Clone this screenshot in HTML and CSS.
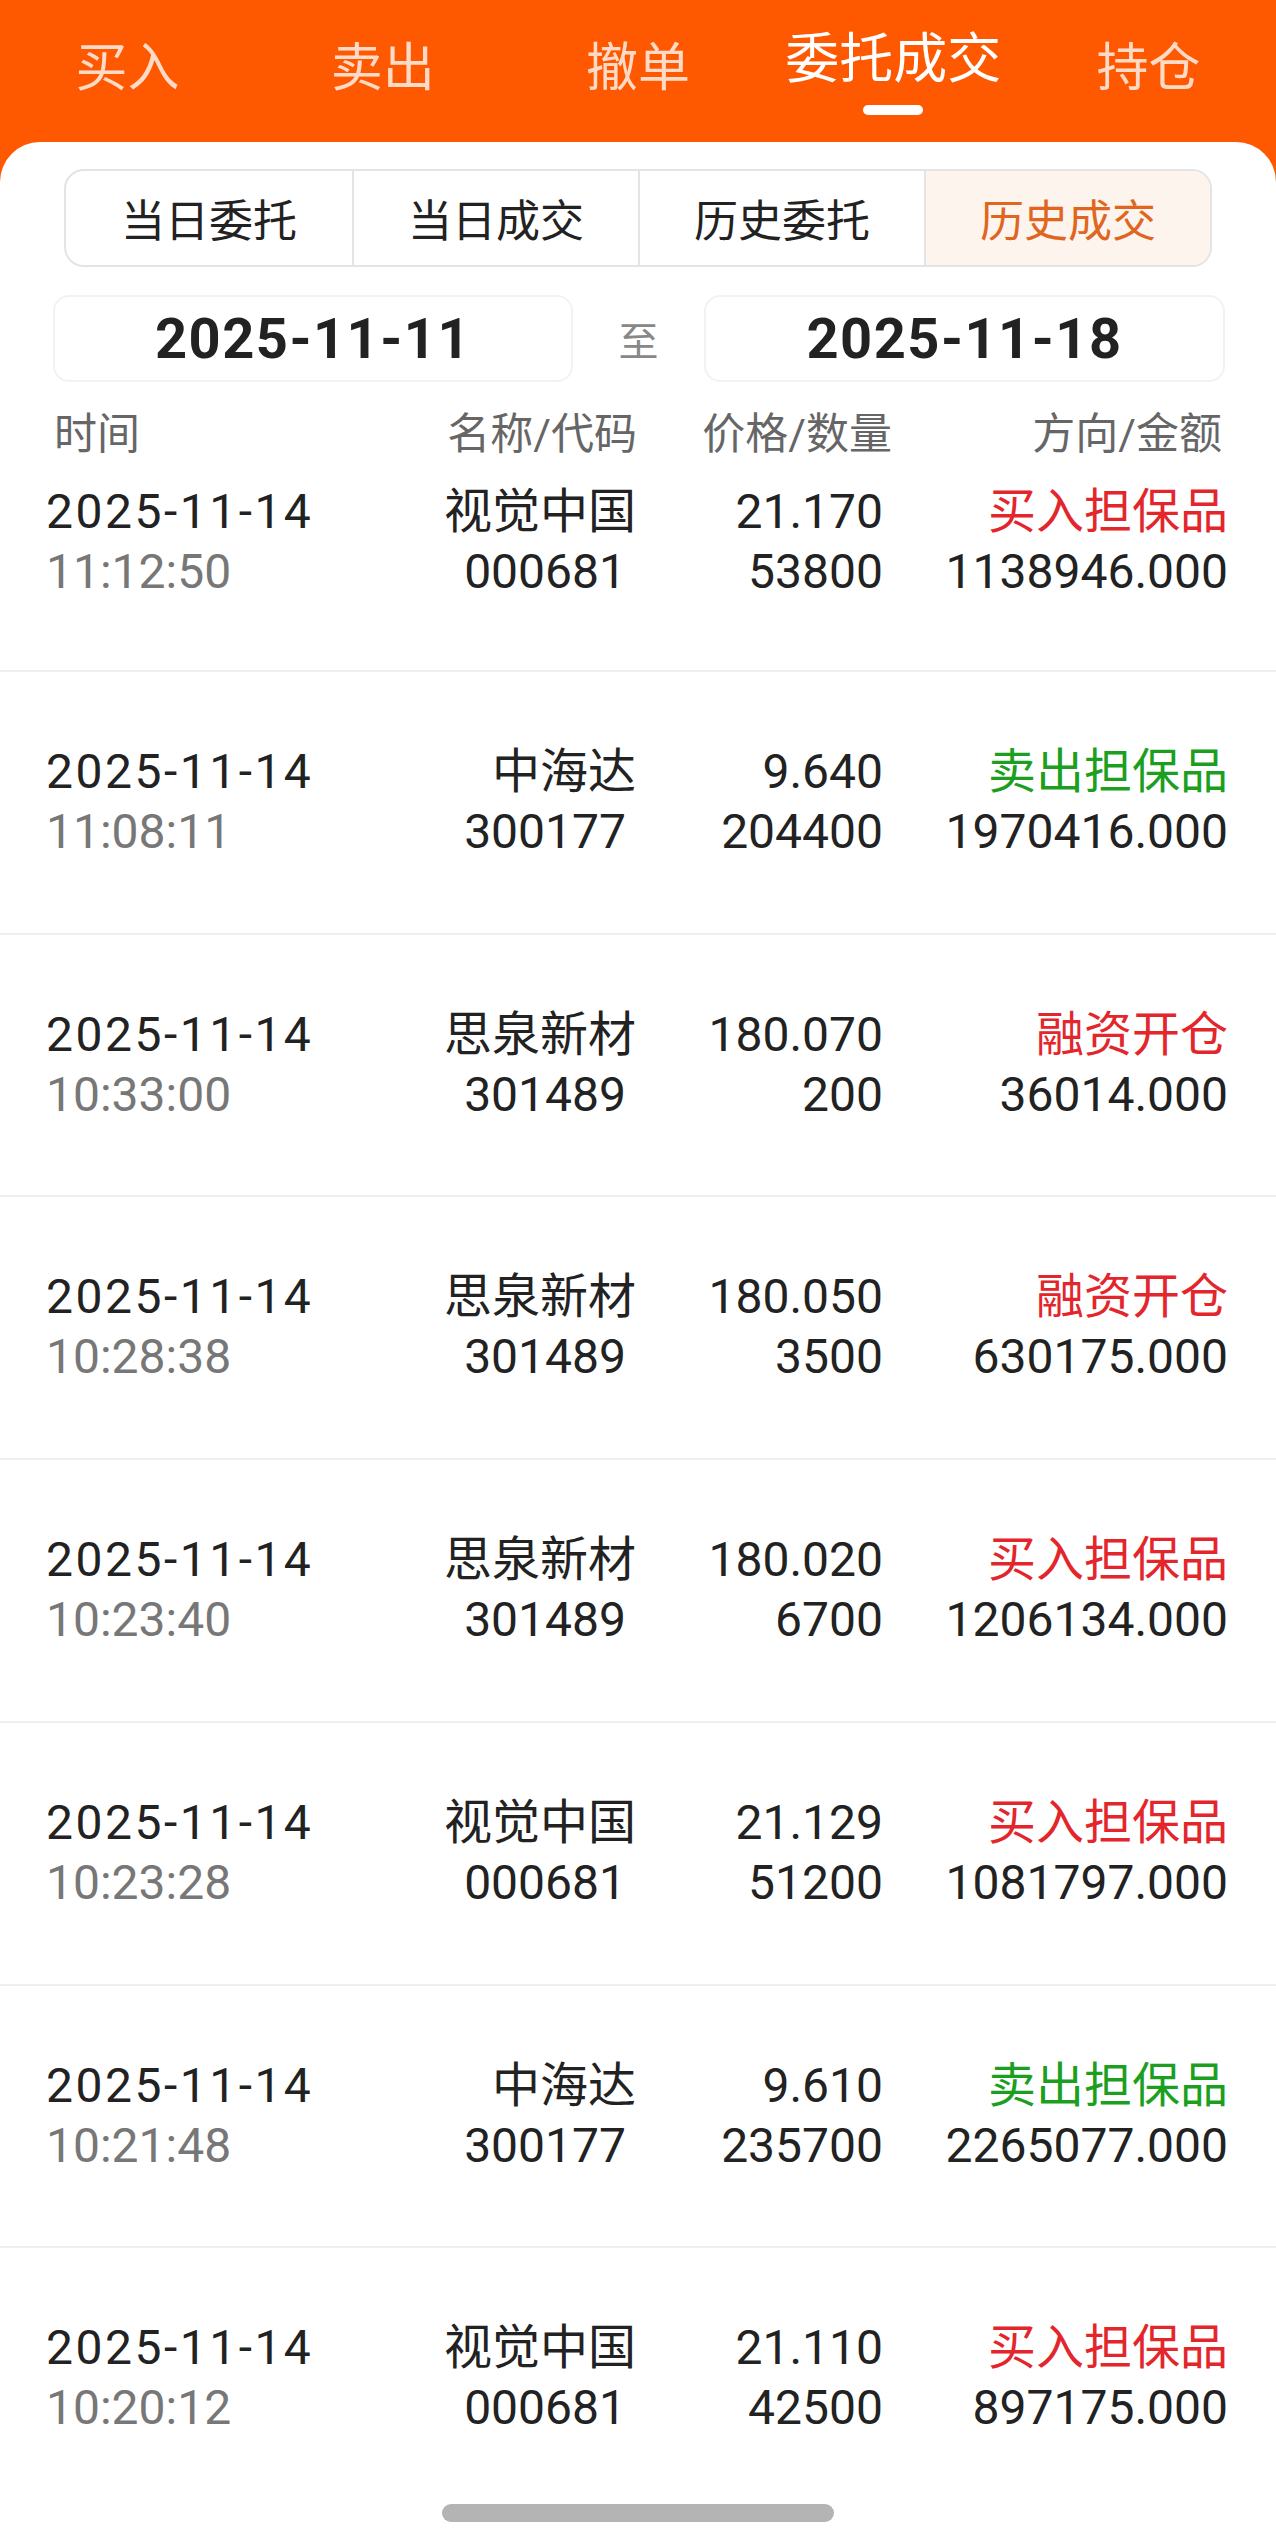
FILE: index.html
```html
<!DOCTYPE html>
<html lang="zh-CN">
<head>
    <meta charset="UTF-8">
    <meta name="viewport" content="width=device-width, initial-scale=1.0">
    <title>委托成交</title>
    <link rel="stylesheet" href="styles.css">
</head>
<body>
    <div class="app">
        <!-- 顶部交易导航 -->
        <nav class="trade-tabs">
            <div class="tab">买入</div>
            <div class="tab">卖出</div>
            <div class="tab">撤单</div>
            <div class="tab active">委托成交</div>
            <div class="tab">持仓</div>
        </nav>

        <div class="panel">
            <div class="segment">
                <div class="seg-item">当日委托</div>
                <div class="seg-item">当日成交</div>
                <div class="seg-item">历史委托</div>
                <div class="seg-item active">历史成交</div>
            </div>

            <div class="date-range">
                <div class="date-box">2025-11-11</div>
                <div class="date-to">至</div>
                <div class="date-box">2025-11-18</div>
            </div>

            <div class="list-head">
                <div>时间</div>
                <div>名称/代码</div>
                <div>价格/数量</div>
                <div>方向/金额</div>
            </div>

            <!-- 成交记录 -->
            <div class="list">
                <div class="row">
                    <div class="cell"><div class="day">2025-11-14</div><div class="sub">11:12:50</div></div>
                    <div class="cell"><div>视觉中国</div><div class="code">000681</div></div>
                    <div class="cell"><div>21.170</div><div>53800</div></div>
                    <div class="cell"><div class="buy">买入担保品</div><div>1138946.000</div></div>
                </div>
                <div class="row">
                    <div class="cell"><div class="day">2025-11-14</div><div class="sub">11:08:11</div></div>
                    <div class="cell"><div>中海达</div><div class="code">300177</div></div>
                    <div class="cell"><div>9.640</div><div>204400</div></div>
                    <div class="cell"><div class="sell">卖出担保品</div><div>1970416.000</div></div>
                </div>
                <div class="row">
                    <div class="cell"><div class="day">2025-11-14</div><div class="sub">10:33:00</div></div>
                    <div class="cell"><div>思泉新材</div><div class="code">301489</div></div>
                    <div class="cell"><div>180.070</div><div>200</div></div>
                    <div class="cell"><div class="buy">融资开仓</div><div>36014.000</div></div>
                </div>
                <div class="row">
                    <div class="cell"><div class="day">2025-11-14</div><div class="sub">10:28:38</div></div>
                    <div class="cell"><div>思泉新材</div><div class="code">301489</div></div>
                    <div class="cell"><div>180.050</div><div>3500</div></div>
                    <div class="cell"><div class="buy">融资开仓</div><div>630175.000</div></div>
                </div>
                <div class="row">
                    <div class="cell"><div class="day">2025-11-14</div><div class="sub">10:23:40</div></div>
                    <div class="cell"><div>思泉新材</div><div class="code">301489</div></div>
                    <div class="cell"><div>180.020</div><div>6700</div></div>
                    <div class="cell"><div class="buy">买入担保品</div><div>1206134.000</div></div>
                </div>
                <div class="row">
                    <div class="cell"><div class="day">2025-11-14</div><div class="sub">10:23:28</div></div>
                    <div class="cell"><div>视觉中国</div><div class="code">000681</div></div>
                    <div class="cell"><div>21.129</div><div>51200</div></div>
                    <div class="cell"><div class="buy">买入担保品</div><div>1081797.000</div></div>
                </div>
                <div class="row">
                    <div class="cell"><div class="day">2025-11-14</div><div class="sub">10:21:48</div></div>
                    <div class="cell"><div>中海达</div><div class="code">300177</div></div>
                    <div class="cell"><div>9.610</div><div>235700</div></div>
                    <div class="cell"><div class="sell">卖出担保品</div><div>2265077.000</div></div>
                </div>
                <div class="row">
                    <div class="cell"><div class="day">2025-11-14</div><div class="sub">10:20:12</div></div>
                    <div class="cell"><div>视觉中国</div><div class="code">000681</div></div>
                    <div class="cell"><div>21.110</div><div>42500</div></div>
                    <div class="cell"><div class="buy">买入担保品</div><div>897175.000</div></div>
                </div>
            </div>
        </div>
    </div>

    <div class="home-bar"></div>
</body>
</html>
```

FILE: styles.css
```css
body {
    margin: 0;
    padding: 0;
    background-color: #ffffff;
    font-family: Roboto, "Noto Sans CJK SC", sans-serif;
    color: #222;
}
.app {
    background-color: #fe5800;
}

/* 顶部导航 */
.trade-tabs {
    display: grid;
    grid-template-columns: repeat(5, 1fr);
    height: 142px;
}
.tab {
    padding-top: 43px;
    text-align: center;
    font-size: 52px;
    line-height: 52px;
    color: rgba(255, 255, 255, 0.78);
}
.tab.active {
    padding-top: 33px;
    font-size: 54px;
    line-height: 54px;
    color: #fff;
}
.tab.active::after {
    content: '';
    display: block;
    width: 60px;
    height: 10px;
    margin: 18px auto 0;
    border-radius: 5px;
    background-color: #fff;
}

.panel {
    background-color: #fff;
    border-radius: 40px 40px 0 0;
    padding-top: 27px;
}

/* 分段选择 */
.segment {
    display: grid;
    grid-template-columns: repeat(4, 1fr);
    height: 98px;
    margin: 0 64px;
    border: 2px solid #e4e4e4;
    border-radius: 20px;
    box-sizing: border-box;
    overflow: hidden;
}
.seg-item {
    display: flex;
    align-items: center;
    justify-content: center;
    font-size: 44px;
    color: #222;
    border-left: 2px solid #e4e4e4;
}
.seg-item:first-child {
    border-left: none;
}
.seg-item.active {
    background-color: #fdf4ee;
    color: #e0661f;
}

/* 日期范围 */
.date-range {
    display: grid;
    grid-template-columns: 520px 1fr 521px;
    align-items: center;
    margin-top: 28px;
    padding: 0 51px 0 53px;
}
.date-box {
    height: 87px;
    display: flex;
    align-items: center;
    justify-content: center;
    border: 2px solid #f2f2f2;
    border-radius: 16px;
    box-sizing: border-box;
    font-size: 56px;
    font-weight: bold;
    letter-spacing: 1.5px;
    color: #222;
}
.date-to {
    text-align: center;
    font-size: 40px;
    color: #888;
}

/* 列表 */
.list-head {
    display: grid;
    grid-template-columns: 322px 261px 255px 330px;
    margin-top: 22px;
    padding: 0 54px;
    font-size: 43px;
    line-height: 60px;
    color: #666;
}
.list-head div {
    text-align: right;
}
.list-head div:first-child {
    text-align: left;
}
.row {
    display: grid;
    grid-template-columns: 330px 260px 247px 345px;
    padding: 70px 48px 70.75px 46px;
    border-bottom: 2px solid #efefef;
    font-size: 48px;
    line-height: 60px;
}
.row:first-child {
    padding-top: 18px;
    padding-bottom: 67.75px;
}
.row:last-child {
    border-bottom: none;
}
.cell {
    text-align: right;
    white-space: nowrap;
}
.cell:first-child {
    text-align: left;
}
.day {
    letter-spacing: 2.5px;
}
.sub {
    color: #777;
}
.code {
    padding-right: 10px;
}
.buy {
    color: #e3262c;
}
.sell {
    color: #1c9f1f;
}

.home-bar {
    position: fixed;
    left: 50%;
    bottom: 20px;
    width: 392px;
    height: 18px;
    margin-left: -196px;
    border-radius: 9px;
    background-color: #b4b4b4;
}
```
